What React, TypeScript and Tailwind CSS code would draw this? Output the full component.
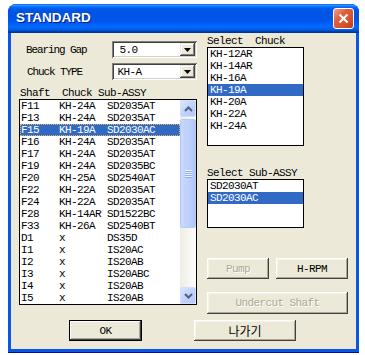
import React from "react";

const rows: [string, string, string][] = [
  ["F11", "KH-24A", "SD2035AT"],
  ["F13", "KH-24A", "SD2035AT"],
  ["F15", "KH-19A", "SD2030AC"],
  ["F16", "KH-24A", "SD2035AT"],
  ["F17", "KH-24A", "SD2035AT"],
  ["F19", "KH-24A", "SD2035BC"],
  ["F20", "KH-25A", "SD2540AT"],
  ["F22", "KH-22A", "SD2035AT"],
  ["F24", "KH-22A", "SD2035AT"],
  ["F28", "KH-14AR", "SD1522BC"],
  ["F33", "KH-26A", "SD2540BT"],
  ["D1", "x", "DS35D"],
  ["I1", "x", "IS20AC"],
  ["I2", "x", "IS20AB"],
  ["I3", "x", "IS20ABC"],
  ["I4", "x", "IS20AB"],
  ["I5", "x", "IS20AB"],
];

const chucks = ["KH-12AR", "KH-14AR", "KH-16A", "KH-19A", "KH-20A", "KH-22A", "KH-24A"];
const subs = ["SD2030AT", "SD2030AC"];

const mono = "font-['Liberation_Mono',monospace] text-[11px] leading-[12px] tracking-[-0.6px]";
const labelMono = "font-['Liberation_Mono',monospace] text-[11px] leading-[12px] tracking-[-1.1px]";

function Combo({ value, pl }: { value: string; pl: string }) {
  return (
    <div className="w-[85px] h-[17px] bg-white flex items-stretch shadow-[inset_1px_1px_0_#808080,inset_-1px_-1px_0_#ffffff,inset_2px_2px_0_#404040,inset_-2px_-2px_0_#d4d0c8] p-[2px]">
      <div className={`flex-1 flex items-center ${pl} ${mono} text-black`}>{value}</div>
      <div className="w-[15px] h-[13px] bg-[#ece9d8] flex items-center justify-center shadow-[inset_-1px_-1px_0_#404040,inset_1px_1px_0_#ece9d8,inset_-2px_-2px_0_#808080,inset_2px_2px_0_#ffffff]">
        <svg width="7" height="4" viewBox="0 0 7 4">
          <polygon points="0,0 7,0 3.5,4" fill="#000" />
        </svg>
      </div>
    </div>
  );
}

function ScrollBtn({ up }: { up: boolean }) {
  return (
    <div className="h-[17px] rounded-[2px] border border-[#d2defa] bg-[linear-gradient(135deg,#dae6fe_0%,#c1d3fb_50%,#b4c8f7_100%)] flex items-center justify-center">
      <svg width="9" height="6" viewBox="0 0 9 6">
        <polyline
          points={up ? "1,5 4.5,1.5 8,5" : "1,1 4.5,4.5 8,1"}
          fill="none"
          stroke="#4d6185"
          strokeWidth="2"
        />
      </svg>
    </div>
  );
}

function Btn({
  children,
  w,
  h = "h-[21px]",
  disabled = false,
  def = false,
  korean = false,
}: {
  children: React.ReactNode;
  w: string;
  h?: string;
  disabled?: boolean;
  def?: boolean;
  korean?: boolean;
}) {
  const font = korean
    ? "font-['Noto_Sans_CJK_KR',sans-serif] text-[12px] leading-[14px]"
    : mono;
  const color = disabled ? "text-[#aca899] [text-shadow:1px_1px_0_#ffffff]" : "text-black";
  const shadow = def
    ? "border border-black shadow-[inset_-1px_-1px_0_#404040,inset_1px_1px_0_#ffffff,inset_-2px_-2px_0_#aca899]"
    : "shadow-[inset_-1px_-1px_0_#404040,inset_1px_1px_0_#ffffff,inset_-2px_-2px_0_#aca899,inset_2px_2px_0_#f5f4ea]";
  return (
    <div className={`${w} ${h} bg-[#ece9d8] flex items-center justify-center ${shadow} ${font} ${color}`}>
      {children}
    </div>
  );
}

export default function App() {
  return (
    <div className="w-[365px] h-[355px] bg-white pt-[4px] pl-[8px]">
      <div className="w-[351px] h-[349px] flex flex-col rounded-t-[8px] overflow-hidden bg-[#0a56e6] shadow-[inset_0_-1px_0_#00138c]">
        {/* title bar */}
        <div className="h-[29px] flex items-center pl-[8px] pr-[5px] bg-[linear-gradient(to_bottom,#0058ee_0%,#3593ff_4%,#288eff_6%,#127dff_8%,#036ffc_10%,#0262ee_14%,#0057e5_20%,#0054e3_24%,#0055eb_56%,#005bf5_66%,#026afe_76%,#0062ef_86%,#0052d6_92%,#0040ab_94%,#003092_100%)]">
          <div className="flex-1 font-['Liberation_Sans',sans-serif] font-bold text-[13.5px] text-white [text-shadow:1px_1px_0_#0a1883]">
            STANDARD
          </div>
          <div className="w-[21px] h-[21px] rounded-[3px] border border-white bg-[linear-gradient(135deg,#f0a28a_0%,#e0603e_35%,#d6502f_70%,#c2381a_100%)] flex items-center justify-center">
            <svg width="11" height="11" viewBox="0 0 11 11">
              <line x1="1.5" y1="1.5" x2="9.5" y2="9.5" stroke="#fff" strokeWidth="2.2" />
              <line x1="9.5" y1="1.5" x2="1.5" y2="9.5" stroke="#fff" strokeWidth="2.2" />
            </svg>
          </div>
        </div>

        {/* client */}
        <div className="flex-1 mx-[3px] mb-[4px] bg-[#ece9d8] flex flex-col">
          <div className="h-[287px] flex">
            {/* left column */}
            <div className="ml-[8px] w-[178px] pt-[8px] flex flex-col">
              <div className="h-[17px] flex items-center">
                <div className={`w-[94px] pl-[7px] ${labelMono} text-black`}>Bearing Gap</div>
                <Combo value="5.0" pl="pl-[5px]" />
              </div>
              <div className="mt-[5px] h-[17px] flex items-center">
                <div className={`w-[94px] pl-[8px] ${labelMono} text-black`}>Chuck TYPE</div>
                <Combo value="KH-A" pl="pl-[3px]" />
              </div>
              <div className={`mt-[7px] h-[12px] pl-[1px] whitespace-pre ${mono} text-black`}>
                {"Shaft  Chuck Sub-ASSY"}
              </div>
              <div className="h-[206px] border border-black bg-white flex">
                <div className="flex-1 flex flex-col">
                  {rows.map(([a, b, c], i) => {
                    const sel = i === 2;
                    return (
                      <div
                        key={a}
                        className={`h-[12px] flex ${mono} ${
                          sel
                            ? "bg-[#316ac5] text-white outline outline-1 outline-dotted outline-[#f0b050] -outline-offset-1"
                            : "text-black"
                        }`}
                      >
                        <div className="w-[39px] pl-[1px]">{a}</div>
                        <div className="w-[48px]">{b}</div>
                        <div className="flex-1">{c}</div>
                      </div>
                    );
                  })}
                </div>
                <div className="w-[16px] bg-[linear-gradient(to_right,#eeede5,#fdfdfa)] flex flex-col">
                  <ScrollBtn up />
                  <div className="mt-[2px] h-[109px] rounded-[2px] border border-[#b6c9f4] bg-[linear-gradient(to_right,#c9d8fc,#bcd0fb_60%,#b0c6f6)] flex flex-col items-center justify-center gap-[1px]">
                    {[0, 1, 2, 3].map((k) => (
                      <div key={k} className="w-[7px] h-[1px] bg-[#eef4fe] shadow-[0_1px_0_#8cb0f8]" />
                    ))}
                  </div>
                  <div className="flex-1" />
                  <ScrollBtn up={false} />
                </div>
              </div>
            </div>

            {/* right column */}
            <div className="ml-[10px] w-[142px] pt-[2px] flex flex-col">
              <div className={`h-[12px] whitespace-pre ${mono} text-black`}>{"Select  Chuck"}</div>
              <div className="w-[97px] h-[99px] border border-black bg-white flex flex-col">
                {chucks.map((c, i) => (
                  <div
                    key={c}
                    className={`h-[12px] pl-[2px] ${mono} ${i === 3 ? "bg-[#316ac5] text-white" : "text-black"}`}
                  >
                    {c}
                  </div>
                ))}
              </div>
              <div className={`mt-[21px] h-[12px] whitespace-pre ${mono} text-black`}>{"Select Sub-ASSY"}</div>
              <div className="w-[97px] h-[49px] border border-black bg-white flex flex-col">
                {subs.map((c, i) => (
                  <div
                    key={c}
                    className={`h-[12px] pl-[2px] ${mono} ${i === 1 ? "bg-[#316ac5] text-white" : "text-black"}`}
                  >
                    {c}
                  </div>
                ))}
              </div>
              <div className="mt-[30px] flex gap-[7px]">
                <Btn w="w-[62px]" disabled>
                  Pump
                </Btn>
                <Btn w="w-[72px]">H-RPM</Btn>
              </div>
              <div className="mt-[13px]">
                <Btn w="w-[141px]" h="h-[22px]" disabled>
                  Undercut Shaft
                </Btn>
              </div>
            </div>
          </div>

          {/* bottom buttons */}
          <div className="flex pl-[58px] gap-[52px]">
            <Btn w="w-[73px]" def>
              OK
            </Btn>
            <Btn w="w-[102px]" korean>
              나가기
            </Btn>
          </div>
        </div>
      </div>
    </div>
  );
}
